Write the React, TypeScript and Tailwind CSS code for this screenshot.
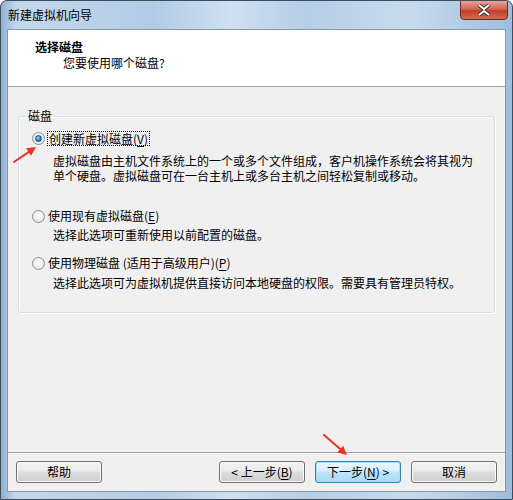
import React from "react";

const font = { fontFamily: '"Noto Sans CJK SC", "Liberation Sans", sans-serif' };

const Radio = ({ checked }: { checked?: boolean }) => (
  <span className="relative inline-flex h-[13px] w-[13px] shrink-0 items-center justify-center rounded-full border border-[#8f8f8f] bg-[radial-gradient(circle_at_50%_40%,#ffffff,#dcdcdc)]">
    {checked && (
      <span className="h-[7px] w-[7px] rounded-full border border-[#1c5180] bg-[radial-gradient(circle_at_40%_35%,#9fdcfa,#1f7cc3_60%,#0d4f8f)]" />
    )}
  </span>
);

const Btn = ({ children, primary }: { children: React.ReactNode; primary?: boolean }) => (
  <button
    className={
      "flex h-[22px] w-[86px] items-center justify-center rounded-[3px] border text-[12px] leading-none text-black " +
      (primary
        ? "border-[#3c7fb1] bg-[linear-gradient(#eaf6fd_0%,#d9f0fc_45%,#bee6fd_50%,#a7d9f5_100%)] shadow-[inset_0_0_0_1px_#9ee3fb]"
        : "border-[#707070] bg-[linear-gradient(#f2f2f2_0%,#ebebeb_45%,#dddddd_50%,#cfcfcf_100%)] shadow-[inset_0_0_0_1px_#fcfcfc]")
    }
  >
    {children}
  </button>
);

const Arrow = ({ x1, y1, x2, y2 }: { x1: number; y1: number; x2: number; y2: number }) => {
  const a = Math.atan2(y2 - y1, x2 - x1);
  const len = 9;
  const w = 4.5;
  const bx = x2 - Math.cos(a) * len;
  const by = y2 - Math.sin(a) * len;
  const px = -Math.sin(a) * w;
  const py = Math.cos(a) * w;
  return (
    <svg className="pointer-events-none absolute left-0 top-0" width="513" height="500">
      <line x1={x1} y1={y1} x2={bx} y2={by} stroke="#ea3323" strokeWidth="2" strokeLinecap="round" />
      <polygon points={`${x2},${y2} ${bx + px},${by + py} ${bx - px},${by - py}`} fill="#ea3323" />
    </svg>
  );
};

const U = ({ children }: { children: React.ReactNode }) => <span className="underline underline-offset-2">{children}</span>;

export default function App() {
  return (
    <div
      className="relative h-[500px] w-[513px] overflow-hidden rounded-t-[7px] border border-[#3e4d5e] bg-[linear-gradient(90deg,#8fb0d3_0%,#c4d8ec_3%,#b2cbe5_30%,#cfe0f1_45%,#b5cde6_60%,#c8dbee_80%,#9fbddc_100%)]"
      style={font}
    >
      <div className="flex h-[28px] items-center pl-[7px] text-[12px] text-black">新建虚拟机向导</div>

      <div className="absolute right-[4px] top-[-1px] flex h-[20px] w-[48px] items-center justify-center rounded-b-[4px] border border-[#6e2a24] bg-[linear-gradient(#e8a497_0%,#d2654f_45%,#c2412a_55%,#d46a4f_100%)]">
        <svg width="14" height="12" viewBox="0 0 14 12">
          <path d="M2 1 L7 5 L12 1 M2 11 L7 7 L12 11" stroke="#3a2a2a" strokeWidth="4" fill="none" />
          <path d="M2 1 L7 5 L12 1 M2 11 L7 7 L12 11" stroke="#ffffff" strokeWidth="2" fill="none" />
        </svg>
      </div>

      <div className="mx-[6px] flex h-[463px] flex-col border border-[#8a99a8] bg-[#f0f0f0] text-[12px] text-black">
        <div className="h-[57px] border-b border-[#a0a0a0] bg-white">
          <div className="pl-[27px] pt-[10px] font-bold leading-[14px]">选择磁盘</div>
          <div className="pl-[55px] pt-[2px] leading-[14px]">您要使用哪个磁盘?</div>
        </div>

        <fieldset className="mx-[10px] mt-[22px] h-[204px] rounded-[3px] border border-[#d5dfe5] shadow-[inset_1px_1px_0_#fff,1px_1px_0_#fff]">
          <legend className="ml-[7px] px-[2px] leading-[14px]">磁盘</legend>

          <div className="ml-[13px] mt-[8px] flex items-center">
            <Radio checked />
            <span className="ml-[2px] border border-dotted border-black px-[1px] leading-[13px]">
              创建新虚拟磁盘(<U>V</U>)
            </span>
          </div>
          <div className="ml-[34px] mt-[7px] leading-[15px]">
            虚拟磁盘由主机文件系统上的一个或多个文件组成，客户机操作系统会将其视为
            <br />
            单个硬盘。虚拟磁盘可在一台主机上或多台主机之间轻松复制或移动。
          </div>

          <div className="ml-[13px] mt-[26px] flex items-center">
            <Radio />
            <span className="ml-[3px] leading-[14px]">
              使用现有虚拟磁盘(<U>E</U>)
            </span>
          </div>
          <div className="ml-[34px] mt-[5px] leading-[14px]">选择此选项可重新使用以前配置的磁盘。</div>

          <div className="ml-[13px] mt-[14px] flex items-center">
            <Radio />
            <span className="ml-[3px] leading-[14px]">
              使用物理磁盘 (适用于高级用户)(<U>P</U>)
            </span>
          </div>
          <div className="ml-[34px] mt-[6px] leading-[14px]">
            选择此选项可为虚拟机提供直接访问本地硬盘的权限。需要具有管理员特权。
          </div>
        </fieldset>

        <div className="mt-auto border-b border-[#a0a0a0] shadow-[0_1px_0_#fff]" />
        <div className="flex h-[38px] items-start px-[8px] pt-[8px]">
          <Btn>帮助</Btn>
          <div className="ml-auto flex gap-[10px]">
            <Btn>
              &lt; 上一步(<U>B</U>)
            </Btn>
            <Btn primary>
              下一步(<U>N</U>) &gt;
            </Btn>
            <Btn>取消</Btn>
          </div>
        </div>
      </div>

      <Arrow x1={13} y1={161} x2={35} y2={146} />
      <Arrow x1={323} y1={434} x2={346} y2={454} />
    </div>
  );
}
